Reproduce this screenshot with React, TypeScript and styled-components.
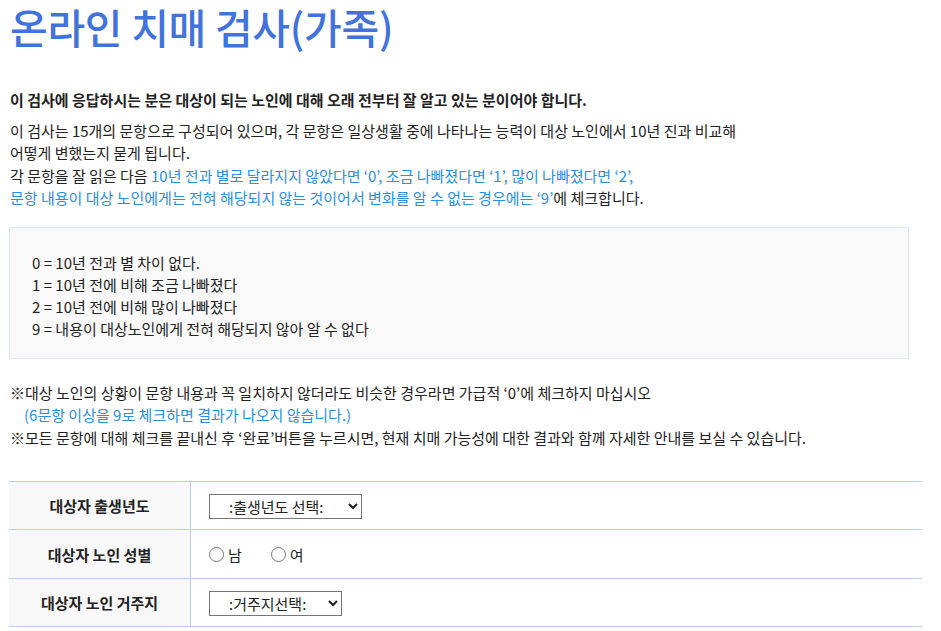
import React from "react";
import styled, { createGlobalStyle } from "styled-components";

const Global = createGlobalStyle`
  html, body { margin: 0; padding: 0; background: #fff; }
  body {
    font-family: "Noto Sans CJK KR", "Noto Sans", sans-serif;
    color: #222;
    font-size: 15px;
  }
`;

const Page = styled.div`
  width: 913px;
  padding: 0 0 0 9px;
`;

const Title = styled.h1`
  margin: 0 0 0 1px;
  font-size: 41px;
  line-height: 53px;
  font-weight: 500;
  color: #4273dd;
  letter-spacing: -0.3px;
`;

const Lead = styled.p`
  margin: 36px 0 0 1px;
  font-weight: 700;
  line-height: 22px;
`;

const Para = styled.p`
  margin: 9px 0 0 1px;
  line-height: 22.4px;
`;

const Blue = styled.span`
  color: #2a8fe0;
`;

const Legend = styled.div`
  margin: 17px 0 0 0;
  width: 900px;
  box-sizing: border-box;
  border: 1px solid #d9eaf8;
  background: #f9f9f9;
  padding: 24px 22px 18px;
  line-height: 22px;
`;

const Notes = styled.div`
  margin: 23px 0 0 1px;
  line-height: 22.5px;
`;

const Indent = styled.div<{ $blue?: boolean }>`
  padding-left: ${(p) => (p.$blue ? "14px" : "0")};
  color: ${(p) => (p.$blue ? "#2a8fe0" : "inherit")};
`;

const Table = styled.div`
  margin-top: 32px;
  width: 913px;
  border-top: 1px solid #b9cff0;
`;

const Row = styled.div<{ $h: number }>`
  display: grid;
  grid-template-columns: 182px 1fr;
  height: ${(p) => p.$h}px;
  border-bottom: 1px solid #b9cff0;
`;

const Label = styled.div`
  background: #f8f8f8;
  border-right: 1px solid #b9cff0;
  display: flex;
  align-items: center;
  justify-content: center;
  font-weight: 700;
`;

const Cell = styled.div`
  display: flex;
  align-items: center;
  padding-left: 18px;
`;

const Select = styled.select<{ $w: number }>`
  width: ${(p) => p.$w}px;
  height: 25px;
  font-family: "Noto Sans CJK KR", sans-serif;
  font-size: 15px;
  color: #222;
  border: 1px solid #767676;
  border-radius: 0;
  background: #fff;
  padding: 0 0 0 15px;
  margin-top: 2px;
`;

const RadioLabel = styled.label`
  display: inline-flex;
  align-items: center;
  gap: 4px;
  margin-right: 29px;
`;

const Radio = styled.input`
  appearance: none;
  margin: 0;
  width: 15px;
  height: 15px;
  border: 1px solid #767676;
  border-radius: 50%;
  background: #fff;
  box-sizing: border-box;
`;

export default function App() {
  return (
    <Page>
      <Global />
      <Title>온라인 치매 검사(가족)</Title>
      <Lead>이 검사에 응답하시는 분은 대상이 되는 노인에 대해 오래 전부터 잘 알고 있는 분이어야 합니다.</Lead>
      <Para>
        이 검사는 15개의 문항으로 구성되어 있으며, 각 문항은 일상생활 중에 나타나는 능력이 대상 노인에서 10년 진과 비교해
        <br />
        어떻게 변했는지 묻게 됩니다.
        <br />
        각 문항을 잘 읽은 다음 <Blue>10년 전과 별로 달라지지 않았다면 ‘0’, 조금 나빠졌다면 ‘1’, 많이 나빠졌다면 ‘2’,</Blue>
        <br />
        <Blue>문항 내용이 대상 노인에게는 전혀 해당되지 않는 것이어서 변화를 알 수 없는 경우에는 ‘9’</Blue>에 체크합니다.
      </Para>
      <Legend>
        <div>0 = 10년 전과 별 차이 없다.</div>
        <div>1 = 10년 전에 비해 조금 나빠졌다</div>
        <div>2 = 10년 전에 비해 많이 나빠졌다</div>
        <div>9 = 내용이 대상노인에게 전혀 해당되지 않아 알 수 없다</div>
      </Legend>
      <Notes>
        <Indent>※대상 노인의 상황이 문항 내용과 꼭 일치하지 않더라도 비슷한 경우라면 가급적 ‘0’에 체크하지 마십시오</Indent>
        <Indent $blue>(6문항 이상을 9로 체크하면 결과가 나오지 않습니다.)</Indent>
        <Indent>※모든 문항에 대해 체크를 끝내신 후 ‘완료’버튼을 누르시면, 현재 치매 가능성에 대한 결과와 함께 자세한 안내를 보실 수 있습니다.</Indent>
      </Notes>
      <Table>
        <Row $h={47}>
          <Label>대상자 출생년도</Label>
          <Cell>
            <Select $w={153} defaultValue="">
              <option value="">:출생년도 선택:</option>
            </Select>
          </Cell>
        </Row>
        <Row $h={48}>
          <Label>대상자 노인 성별</Label>
          <Cell>
            <RadioLabel>
              <Radio type="radio" name="sex" />남
            </RadioLabel>
            <RadioLabel>
              <Radio type="radio" name="sex" />여
            </RadioLabel>
          </Cell>
        </Row>
        <Row $h={47}>
          <Label>대상자 노인 거주지</Label>
          <Cell>
            <Select $w={133} defaultValue="">
              <option value="">:거주지선택:</option>
            </Select>
          </Cell>
        </Row>
      </Table>
    </Page>
  );
}
